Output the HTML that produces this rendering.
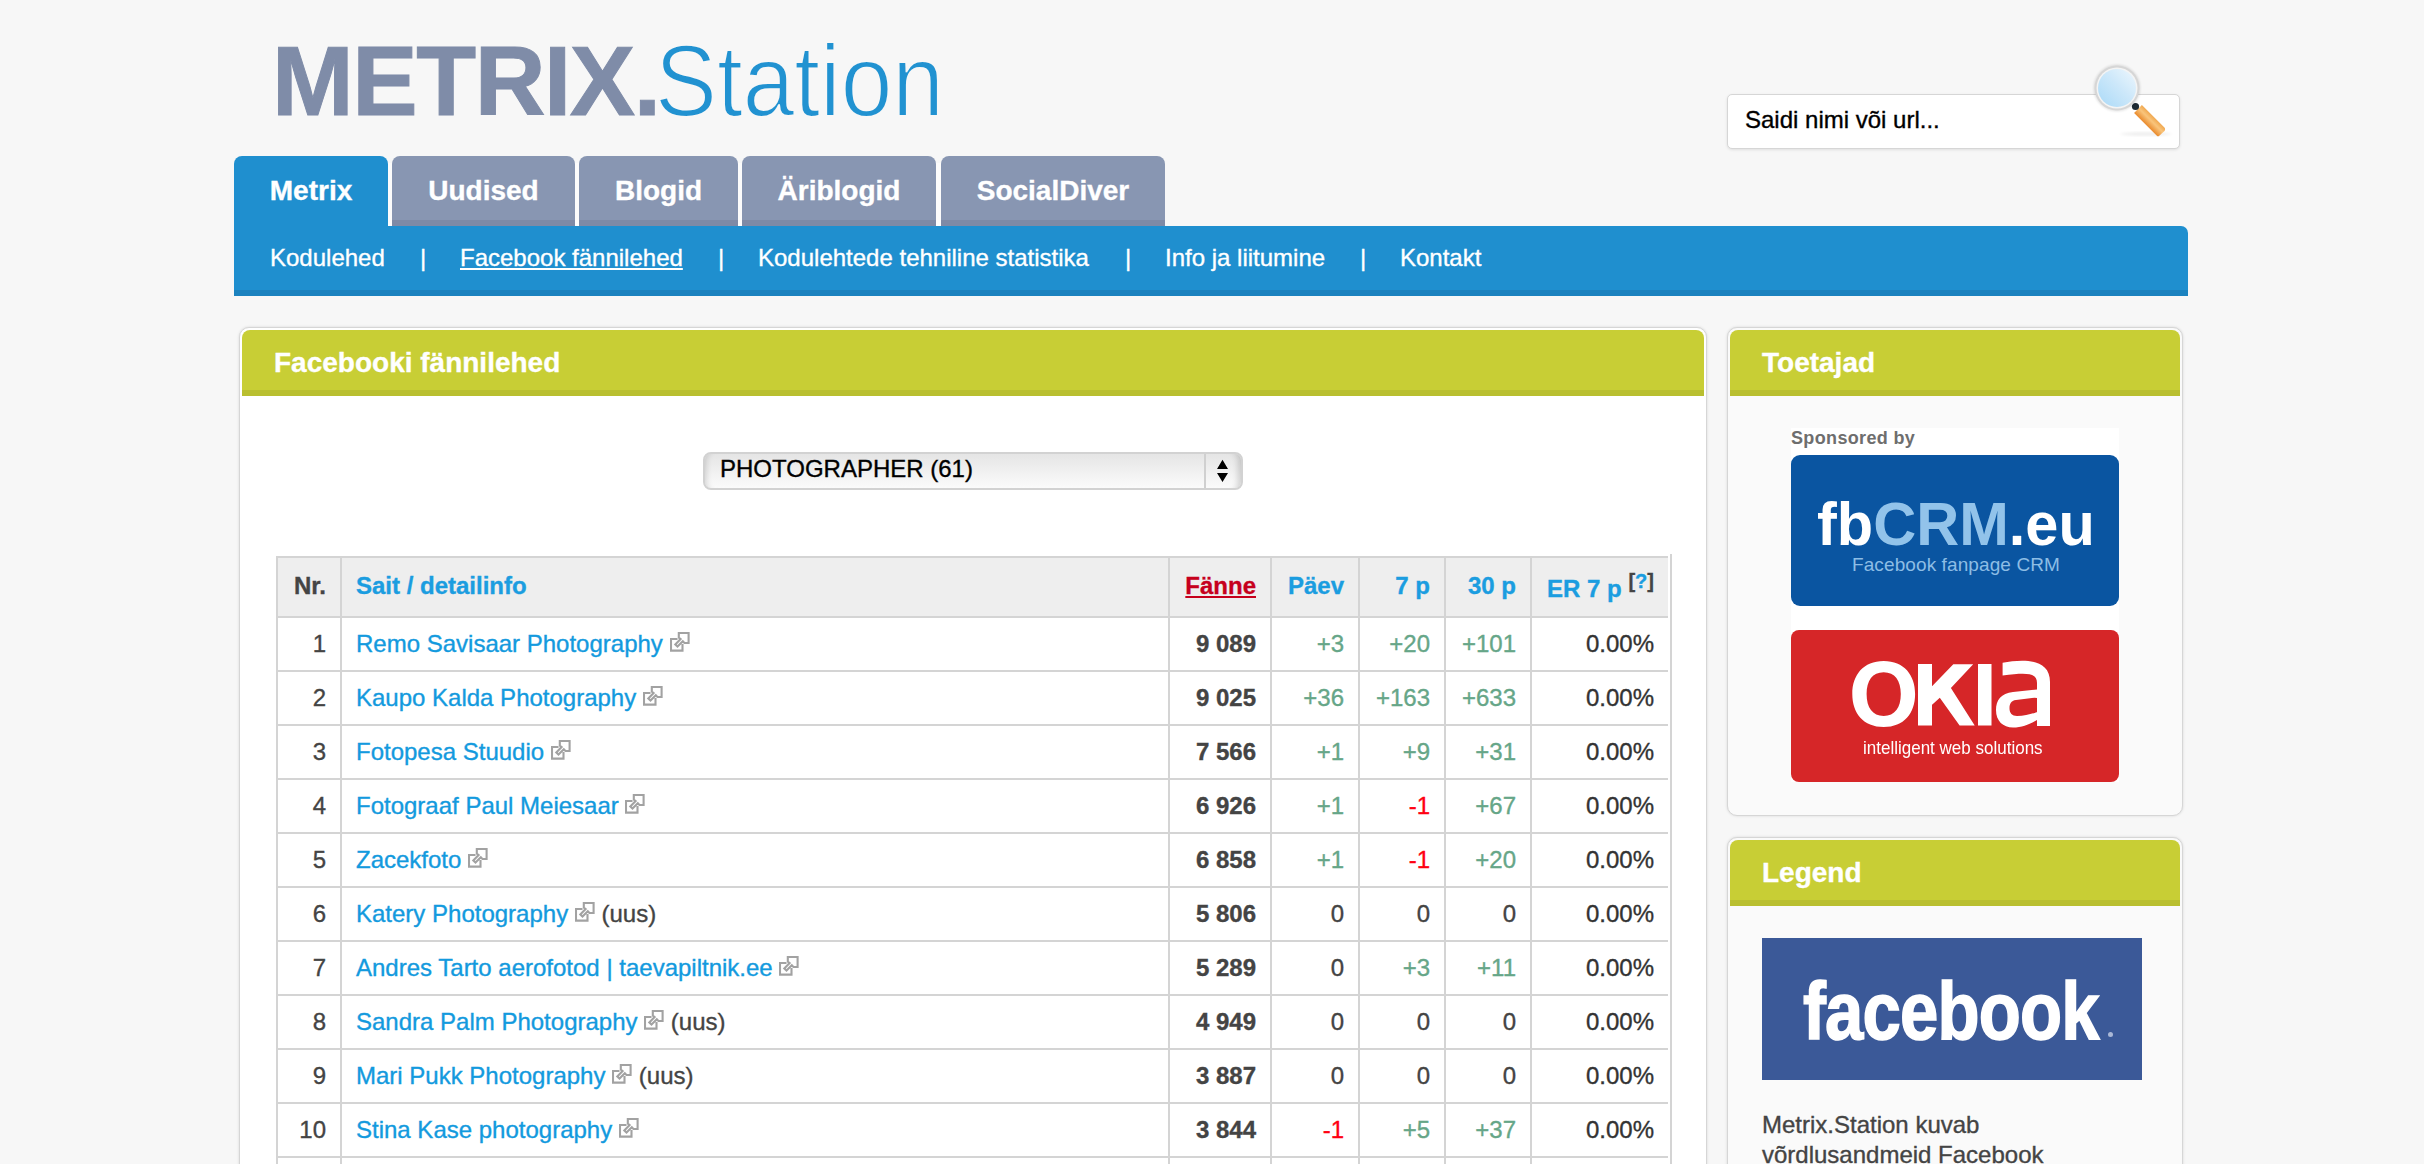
<!DOCTYPE html>
<html><head><meta charset="utf-8">
<style>
*{margin:0;padding:0;box-sizing:border-box}
html,body{width:2424px;height:1164px;overflow:hidden;background:#f7f7f7;font-family:"Liberation Sans",sans-serif;}
.abs{position:absolute}
.logo1{position:absolute;left:272px;top:1px;font-weight:bold;color:#7f8ca8;font-size:98px;line-height:160px;letter-spacing:-1.4px;-webkit-text-stroke:1px #7f8ca8;white-space:nowrap}
.logo2{position:absolute;left:655px;top:1px;color:#2192d1;font-size:102px;line-height:160px;-webkit-text-stroke:2px #f7f7f7;paint-order:fill stroke;transform:scaleX(0.91);transform-origin:0 0;white-space:nowrap}
.search{position:absolute;left:1727px;top:94px;width:453px;height:55px;background:#fff;border:1.5px solid #d6d6d6;border-radius:5px;box-shadow:0 1px 3px rgba(0,0,0,0.10)}
.search span{position:absolute;left:17px;top:1px;line-height:48px;font-size:24px;color:#000}
.tab{position:absolute;top:156px;height:70px;background:#8896b2;border-radius:8px 8px 0 0;color:#fff;font-weight:bold;font-size:28px;text-align:center;line-height:70px}
.tab:after{content:"";position:absolute;left:0;right:0;bottom:0;height:6px;background:#7e8aa6}
.tab.on{background:#1f8fcf}
.tab.on:after{display:none}
.subnav{position:absolute;left:234px;top:226px;width:1954px;height:70px;background:#1f8fcf;border-radius:0 7px 0 0}
.subnav:after{content:"";position:absolute;left:0;right:0;bottom:0;height:6px;background:#1b82bf}
.subnav span{position:absolute;top:-1px;line-height:66px;color:#fff;font-size:24px;white-space:nowrap;-webkit-text-stroke:0.35px #fff}
.subnav span.u{text-decoration:underline;text-underline-offset:2px;text-decoration-thickness:1.6px}
.box{position:absolute;border:1px solid #d6d6d6;border-radius:10px;padding:2px;box-shadow:0 0 3px rgba(0,0,0,0.13)}
.box .hd{position:relative;height:66px;background:#c8ce35;border-radius:8px 8px 0 0;color:#fff;font-weight:bold;font-size:28px;line-height:65px;padding-left:32px}
.box .hd:after{content:"";position:absolute;left:0;right:0;bottom:0;height:6px;background:#b9bf30}

.sel{position:absolute;left:703px;top:452px;width:540px;height:38px;border:2px solid #d2d2d2;border-radius:8px;background:linear-gradient(#e5e5e5,#fbfbfb);overflow:hidden;box-shadow:inset 7px 0 6px -6px rgba(0,0,0,.16),inset -9px 0 6px -6px rgba(0,0,0,.16)}
.sel span{position:absolute;left:15px;top:-2px;line-height:34px;font-size:24px;color:#000}
.sel .dv{position:absolute;left:499px;top:0;bottom:0;width:2px;background:#d0d0d0}
.tbl{position:absolute;left:276px;top:556px;border-collapse:separate;border-spacing:0;table-layout:fixed;width:1392px;border-top:2px solid #d4d4d4;font-size:24px}
.tbl td,.tbl th{border-left:2px solid #d4d4d4;border-bottom:2px solid #d4d4d4;height:54px;line-height:52px;padding:0 14px;white-space:nowrap;text-align:right;color:#444;overflow:hidden}
.tbl th{height:60px;line-height:56px;vertical-align:top;background:#eee;color:#1b9de0;font-weight:bold}
.tbl th.n{color:#444}
.tbl td.s,.tbl th.s{text-align:left}
.tbl a{color:#139ade}
.tbl td,.tbl th,.legtxt,.search span,.sel span,.tab,.box .hd{-webkit-text-stroke:0.35px currentColor}
.tbl td.f{font-weight:bold}
.tbl td.g{color:#66a688}
.tbl td.r{color:#f01}
.tbl td.e{color:#333}
.tbl th.fa{color:#c6001c;text-decoration:underline;text-underline-offset:2px;text-decoration-thickness:1.6px}
.tbl sup{font-size:20px;color:#444;line-height:0}
.tbl sup b{color:#1b9de0}
.ext{vertical-align:0px}
.rline{position:absolute;left:1670px;top:554px;width:2px;height:620px;background:#d4d4d4}

.spons{position:absolute;left:1791px;top:428px;width:328px;height:354px;background:#fff}
.spons .t{position:absolute;left:0;top:0;font-size:18px;font-weight:bold;color:#6e6e6e;line-height:20px;white-space:nowrap;letter-spacing:0.35px}
.fbcrm{position:absolute;left:0;top:27px;width:328px;height:151px;background:#0a55a1;border-radius:9px}
.fbcrm .a{position:absolute;left:26px;top:34px;font-size:62px;font-weight:bold;color:#fff;line-height:70px;white-space:nowrap;transform:scaleX(0.96);transform-origin:0 0}
.fbcrm .a i{font-style:normal;color:#92c3ea}
.fbcrm .b{position:absolute;left:61px;top:98px;font-size:19px;color:#8dbde5;line-height:24px;white-space:nowrap;letter-spacing:0.1px}
.okia{position:absolute;left:0;top:202px;width:328px;height:152px;background:#d62628;border-radius:8px}
.okia .b{position:absolute;left:72px;top:106px;font-size:19px;color:#fff;line-height:24px;white-space:nowrap;transform:scaleX(0.895);transform-origin:0 0}
.fblogo{position:absolute;left:1762px;top:938px;width:380px;height:142px;background:#3b5998;overflow:hidden}
.fblogo span{position:absolute;left:41px;top:18px;font-size:82px;font-weight:bold;color:#fff;line-height:110px;white-space:nowrap;transform:scaleX(0.84);transform-origin:0 0;letter-spacing:-1px;-webkit-text-stroke:1.6px #fff}
.fblogo i{position:absolute;left:346px;top:94px;width:5px;height:5px;border-radius:50%;background:#aab8d6}
.legtxt{position:absolute;left:1762px;top:1110px;font-size:24px;line-height:30px;color:#444;white-space:nowrap}
</style></head>
<body>
<div class="logo1">METRIX.</div>
<div class="logo2">Station</div>
<div class="search"><span>Saidi nimi või url...</span></div>
<svg style="position:absolute;left:2088px;top:58px" width="90" height="84" viewBox="0 0 90 84">
<defs>
<linearGradient id="lens" x1="0" y1="1" x2="1" y2="0"><stop offset="0" stop-color="#a9d9f7"/><stop offset="0.55" stop-color="#cde8fa"/><stop offset="1" stop-color="#eef7fd"/></linearGradient>
<linearGradient id="hnd" gradientUnits="userSpaceOnUse" x1="57.6" y1="66.4" x2="65.4" y2="58.6"><stop offset="0" stop-color="#e98a2c"/><stop offset="0.6" stop-color="#f9c57c"/><stop offset="1" stop-color="#f0a850"/></linearGradient>
<filter id="bl" x="-50%" y="-50%" width="200%" height="200%"><feGaussianBlur stdDeviation="1.5"/></filter>
<filter id="bl2" x="-50%" y="-50%" width="200%" height="200%"><feGaussianBlur stdDeviation="1"/></filter>
</defs>
<ellipse cx="58" cy="76" rx="26" ry="1.5" fill="#000" opacity="0.08" filter="url(#bl)"/>
<path d="M46.1 54.9L53.9 47.1L76.9 70.1Q77.5 72 76.5 73L71 78Q70 78.5 69.1 77.9Z" fill="url(#hnd)"/>
<circle cx="47.5" cy="48.5" r="3.6" fill="#1e2a33"/>
<circle cx="29" cy="30" r="23.5" fill="#000" opacity="0.10" filter="url(#bl2)"/>
<circle cx="29" cy="30" r="22.5" fill="#d6d6d6"/>
<circle cx="29" cy="30" r="20.5" fill="#f4f4f4"/>
<circle cx="29" cy="30" r="19" fill="url(#lens)"/>
</svg>

<div class="abs" style="left:388px;top:163px;width:4px;height:63px;background:#fcfcfc"></div><div class="abs" style="left:575px;top:163px;width:4px;height:63px;background:#fcfcfc"></div><div class="abs" style="left:738px;top:163px;width:4px;height:63px;background:#fcfcfc"></div><div class="abs" style="left:936px;top:163px;width:5px;height:63px;background:#fcfcfc"></div>
<div class="tab on" style="left:234px;width:154px">Metrix</div>
<div class="tab" style="left:392px;width:183px">Uudised</div>
<div class="tab" style="left:579px;width:159px">Blogid</div>
<div class="tab" style="left:742px;width:194px">Äriblogid</div>
<div class="tab" style="left:941px;width:224px">SocialDiver</div>

<div class="subnav">
<span style="left:36px">Kodulehed</span>
<span style="left:186px">|</span>
<span class="u" style="left:226px">Facebook fännilehed</span>
<span style="left:484px">|</span>
<span style="left:524px">Kodulehtede tehniline statistika</span>
<span style="left:891px">|</span>
<span style="left:931px">Info ja liitumine</span>
<span style="left:1126px">|</span>
<span style="left:1166px">Kontakt</span>
</div>

<div class="box" style="left:239px;top:327px;width:1468px;height:900px;background:#fff">
<div class="hd">Facebooki fännilehed</div>
</div>


<div class="sel"><span>PHOTOGRAPHER (61)</span><div class="dv"></div>
<svg style="position:absolute;left:512px;top:5px" width="12" height="24" viewBox="0 0 12 24"><path d="M5.5 0.8L11 9.9H0Z M0 14H11L5.5 23Z" fill="#000"/></svg></div>
<table class="tbl">
<colgroup><col style="width:64px"><col style="width:828px"><col style="width:102px"><col style="width:88px"><col style="width:86px"><col style="width:86px"><col style="width:138px"></colgroup>
<tr><th class="n">Nr.</th><th class="s">Sait / detailinfo</th><th class="fa">Fänne</th><th>Päev</th><th>7 p</th><th>30 p</th><th><span style="position:relative;top:3px">ER 7 p <sup style="position:relative;top:0px">[<b>?</b>]</sup></span></th></tr>
<tr><td class="n">1</td><td class="s"><a>Remo Savisaar Photography</a> <svg class="ext" width="20" height="20" viewBox="0 0 20 20"><path d="M8.8 5.5V1H18.6V11H14.5L12.8 9.3L7.5 14.6L5.3 12.4L10.6 7.1Z M7.5 7H1V18.6H12.5V12" fill="none" stroke="#a2a2a2" stroke-width="2.1"/></svg></td><td class="f">9 089</td><td class="g">+3</td><td class="g">+20</td><td class="g">+101</td><td class="e">0.00%</td></tr>
<tr><td class="n">2</td><td class="s"><a>Kaupo Kalda Photography</a> <svg class="ext" width="20" height="20" viewBox="0 0 20 20"><path d="M8.8 5.5V1H18.6V11H14.5L12.8 9.3L7.5 14.6L5.3 12.4L10.6 7.1Z M7.5 7H1V18.6H12.5V12" fill="none" stroke="#a2a2a2" stroke-width="2.1"/></svg></td><td class="f">9 025</td><td class="g">+36</td><td class="g">+163</td><td class="g">+633</td><td class="e">0.00%</td></tr>
<tr><td class="n">3</td><td class="s"><a>Fotopesa Stuudio</a> <svg class="ext" width="20" height="20" viewBox="0 0 20 20"><path d="M8.8 5.5V1H18.6V11H14.5L12.8 9.3L7.5 14.6L5.3 12.4L10.6 7.1Z M7.5 7H1V18.6H12.5V12" fill="none" stroke="#a2a2a2" stroke-width="2.1"/></svg></td><td class="f">7 566</td><td class="g">+1</td><td class="g">+9</td><td class="g">+31</td><td class="e">0.00%</td></tr>
<tr><td class="n">4</td><td class="s"><a>Fotograaf Paul Meiesaar</a> <svg class="ext" width="20" height="20" viewBox="0 0 20 20"><path d="M8.8 5.5V1H18.6V11H14.5L12.8 9.3L7.5 14.6L5.3 12.4L10.6 7.1Z M7.5 7H1V18.6H12.5V12" fill="none" stroke="#a2a2a2" stroke-width="2.1"/></svg></td><td class="f">6 926</td><td class="g">+1</td><td class="r">-1</td><td class="g">+67</td><td class="e">0.00%</td></tr>
<tr><td class="n">5</td><td class="s"><a>Zacekfoto</a> <svg class="ext" width="20" height="20" viewBox="0 0 20 20"><path d="M8.8 5.5V1H18.6V11H14.5L12.8 9.3L7.5 14.6L5.3 12.4L10.6 7.1Z M7.5 7H1V18.6H12.5V12" fill="none" stroke="#a2a2a2" stroke-width="2.1"/></svg></td><td class="f">6 858</td><td class="g">+1</td><td class="r">-1</td><td class="g">+20</td><td class="e">0.00%</td></tr>
<tr><td class="n">6</td><td class="s"><a>Katery Photography</a> <svg class="ext" width="20" height="20" viewBox="0 0 20 20"><path d="M8.8 5.5V1H18.6V11H14.5L12.8 9.3L7.5 14.6L5.3 12.4L10.6 7.1Z M7.5 7H1V18.6H12.5V12" fill="none" stroke="#a2a2a2" stroke-width="2.1"/></svg> (uus)</td><td class="f">5 806</td><td class="z">0</td><td class="z">0</td><td class="z">0</td><td class="e">0.00%</td></tr>
<tr><td class="n">7</td><td class="s"><a>Andres Tarto aerofotod | taevapiltnik.ee</a> <svg class="ext" width="20" height="20" viewBox="0 0 20 20"><path d="M8.8 5.5V1H18.6V11H14.5L12.8 9.3L7.5 14.6L5.3 12.4L10.6 7.1Z M7.5 7H1V18.6H12.5V12" fill="none" stroke="#a2a2a2" stroke-width="2.1"/></svg></td><td class="f">5 289</td><td class="z">0</td><td class="g">+3</td><td class="g">+11</td><td class="e">0.00%</td></tr>
<tr><td class="n">8</td><td class="s"><a>Sandra Palm Photography</a> <svg class="ext" width="20" height="20" viewBox="0 0 20 20"><path d="M8.8 5.5V1H18.6V11H14.5L12.8 9.3L7.5 14.6L5.3 12.4L10.6 7.1Z M7.5 7H1V18.6H12.5V12" fill="none" stroke="#a2a2a2" stroke-width="2.1"/></svg> (uus)</td><td class="f">4 949</td><td class="z">0</td><td class="z">0</td><td class="z">0</td><td class="e">0.00%</td></tr>
<tr><td class="n">9</td><td class="s"><a>Mari Pukk Photography</a> <svg class="ext" width="20" height="20" viewBox="0 0 20 20"><path d="M8.8 5.5V1H18.6V11H14.5L12.8 9.3L7.5 14.6L5.3 12.4L10.6 7.1Z M7.5 7H1V18.6H12.5V12" fill="none" stroke="#a2a2a2" stroke-width="2.1"/></svg> (uus)</td><td class="f">3 887</td><td class="z">0</td><td class="z">0</td><td class="z">0</td><td class="e">0.00%</td></tr>
<tr><td class="n">10</td><td class="s"><a>Stina Kase photography</a> <svg class="ext" width="20" height="20" viewBox="0 0 20 20"><path d="M8.8 5.5V1H18.6V11H14.5L12.8 9.3L7.5 14.6L5.3 12.4L10.6 7.1Z M7.5 7H1V18.6H12.5V12" fill="none" stroke="#a2a2a2" stroke-width="2.1"/></svg></td><td class="f">3 844</td><td class="r">-1</td><td class="g">+5</td><td class="g">+37</td><td class="e">0.00%</td></tr>
<tr><td class="n"></td><td class="s"></td><td></td><td></td><td></td><td></td><td></td></tr>
</table>
<div class="rline"></div>
<div class="box" style="left:1727px;top:327px;width:456px;height:489px;background:#fafafa">
<div class="hd">Toetajad</div>
</div>

<div class="box" style="left:1727px;top:837px;width:456px;height:400px;background:#fafafa">
<div class="hd">Legend</div>
</div>


<div class="spons"><div class="t">Sponsored by</div>
<div class="fbcrm"><div class="a">fb<i>CRM</i>.eu</div><div class="b">Facebook fanpage CRM</div></div>
<div class="okia">
<svg style="position:absolute;left:0;top:0" width="328" height="152" viewBox="0 0 328 152">
<path fill="#fff" fill-rule="evenodd" d="M92.7 31.1C113 31.1 124.1 45 124.1 64.1C124.1 83.5 113 97.1 92.7 97.1C72.4 97.1 61.3 83.5 61.3 64.1C61.3 45 72.4 31.1 92.7 31.1Z M92.7 42.2C81.5 42.2 75.6 50.5 75.6 64.1C75.6 77.8 81.5 86 92.7 86C103.9 86 109.8 77.8 109.8 64.1C109.8 50.5 103.9 42.2 92.7 42.2Z"/>
<rect x="127" y="34" width="14" height="61.5" fill="#fff"/>
<path d="M140.8 56.6L162.3 34.3H182.2L159.9 58.1L183.7 95.5H168.6L148.8 67.7L140.8 75Z" fill="#fff"/>
<rect x="187" y="34" width="13.5" height="61.5" fill="#fff"/>
<path fill="#fff" d="M211.6 32.7C232 29 259 28 259 52V96H246V53C246 43 237 42 211.6 45.5Z"/>
<path fill="#fff" fill-rule="evenodd" d="M246 59.5L222 62C210 63.5 205 70 205 80C205 91 212 97.5 222 97.5C232 97.5 241 93 246 90Z M246 67.5L225 70C220 70.5 218.5 74 218.5 78.5C218.5 83 221 86 226 86C234 86 241 84 246 82Z"/>
</svg>
<div class="b">intelligent web solutions</div></div>
</div>
<div class="fblogo"><span>facebook</span><i></i></div>
<div class="legtxt">Metrix.Station kuvab<br>võrdlusandmeid Facebook</div>
</body></html>
